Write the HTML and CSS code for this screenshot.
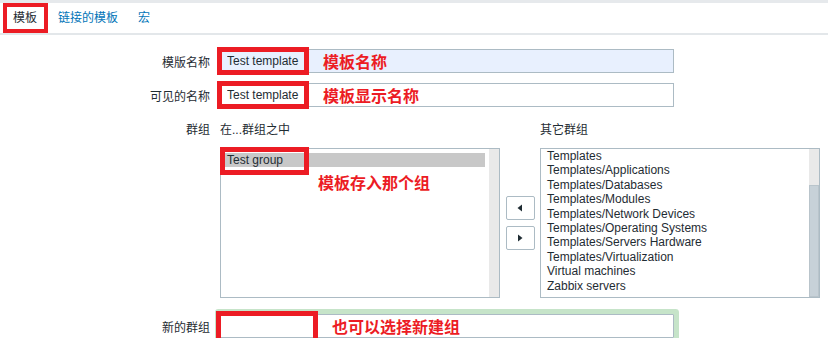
FILE: index.html
```html
<!DOCTYPE html>
<html>
  <head>
    <title>模板</title>
    <link rel="stylesheet" href="styles.css">
  </head>
  <body>
    <div class="topstrip"></div>
    <nav class="tabs">
      <span class="tab active">模板<span class="redbox tabbox"></span></span>
      <a class="tab">链接的模板</a>
      <a class="tab">宏</a>
    </nav>

    <form class="form" action="">
      <div class="row">
        <label class="lbl">模版名称</label>
        <div class="field">
          <input class="txt autofill" value="Test template">
          <span class="redbox namebox"></span>
          <span class="note">模板名称</span>
        </div>
      </div>

      <div class="row">
        <label class="lbl">可见的名称</label>
        <div class="field">
          <input class="txt" value="Test template">
          <span class="redbox namebox"></span>
          <span class="note">模板显示名称</span>
        </div>
      </div>

      <div class="row groups">
        <label class="lbl head">群组</label>
        <div class="twin">
          <div class="col">
            <div class="head">在...群组之中</div>
            <div class="listbox field">
              <div class="items pad">
                <div class="opt selected">Test group</div>
              </div>
              <div class="sbar"></div>
              <span class="redbox groupbox"></span>
              <span class="note groupnote">模板存入那个组</span>
            </div>
          </div>
          <div class="moves">
            <button type="button" class="mv">
              <svg width="6" height="8" viewBox="0 0 6 8"><path d="M5 0.5 L0.5 4 L5 7.5 Z" fill="#1f2c33"/></svg>
            </button>
            <button type="button" class="mv">
              <svg width="6" height="8" viewBox="0 0 6 8"><path d="M1 0.5 L5.5 4 L1 7.5 Z" fill="#1f2c33"/></svg>
            </button>
          </div>
          <div class="col">
            <div class="head">其它群组</div>
            <div class="listbox">
              <div class="items">
                <div class="opt">Templates</div>
                <div class="opt">Templates/Applications</div>
                <div class="opt">Templates/Databases</div>
                <div class="opt">Templates/Modules</div>
                <div class="opt">Templates/Network Devices</div>
                <div class="opt">Templates/Operating Systems</div>
                <div class="opt">Templates/Servers Hardware</div>
                <div class="opt">Templates/Virtualization</div>
                <div class="opt">Virtual machines</div>
                <div class="opt">Zabbix servers</div>
              </div>
              <div class="sbar"><div class="thumb"></div></div>
            </div>
          </div>
        </div>
      </div>

      <div class="row newgroup">
        <label class="lbl">新的群组</label>
        <div class="field">
          <input class="txt glow" value="">
          <span class="redbox newbox"></span>
          <span class="note newnote">也可以选择新建组</span>
        </div>
      </div>
    </form>
  </body>
</html>
```

FILE: styles.css
```css
body {
  margin: 0;
  background: #fff;
  color: #1f2c33;
  font-family: "Liberation Sans", Arial, "Noto Sans CJK SC", sans-serif;
  font-size: 12px;
  overflow: hidden;
}

.topstrip { height: 3px; background: #e6e9ec; }

.tabs {
  display: flex;
  height: 30px;
  align-items: center;
  padding-left: 3px;
  border-bottom: 2px solid #e3e7ea;
}
.tab {
  position: relative;
  height: 30px;
  line-height: 30px;
  padding: 0 10px;
  color: #0275b8;
}
.tab.active { color: #1f2c33; padding-right: 11px; }

.redbox {
  position: absolute;
  border: 5px solid #ec1c24;
  box-sizing: border-box;
  pointer-events: none;
}
.tabbox { left: 0; top: 0; width: 45px; height: 30px; border-width: 4px; }

.note {
  position: absolute;
  top: 50%;
  transform: translateY(-50%);
  color: #ec1c24;
  font-family: "Noto Sans CJK SC", sans-serif;
  font-weight: 700;
  font-size: 16px;
  line-height: 20px;
  white-space: nowrap;
}

.form { display: flex; flex-direction: column; padding-top: 14px; }

.row {
  display: grid;
  grid-template-columns: 210px 454px;
  column-gap: 10px;
  align-items: center;
  margin-bottom: 10px;
}
.lbl { text-align: right; }

.field { position: relative; }

.txt {
  display: block;
  box-sizing: border-box;
  width: 454px;
  height: 24px;
  margin: 0;
  padding: 0 6px;
  border: 1px solid #acbbc4;
  background: #fff;
  color: #1f2c33;
  font: 12px "Liberation Sans", Arial, sans-serif;
  outline: none;
}
.txt.autofill { background: #e8f0fe; }

.namebox { left: -3px; top: -2px; width: 92px; height: 28px; }
.field .note { left: 103px; }

.groups {
  grid-template-columns: 210px 600px;
  align-items: start;
  margin-top: 5px;
  margin-bottom: 16px;
}
.head { line-height: 16px; height: 16px; }
.twin { display: flex; align-items: stretch; }
.col { display: flex; flex-direction: column; flex: none; width: 280px; }
.col .head { margin-bottom: 10px; }

.listbox {
  display: flex;
  box-sizing: border-box;
  height: 150px;
  border: 1px solid #acbbc4;
  background: #fff;
}
.items { flex: 1; overflow: hidden; padding: 0 4px; }
.items.pad { padding-top: 4px; }
.opt { line-height: 14.4px; height: 14.4px; padding-left: 2px; white-space: nowrap; }
.opt.selected { background: #c8c8c8; height: 14px; line-height: 14px; }

.sbar { width: 10px; background: #e9e9e9; display: flex; flex-direction: column; }
.thumb {
  margin-top: 36px;
  flex: 1;
  background: #c7d1d8;
  border: 1px solid #b9c4cb;
}

.groupbox { left: -1px; top: -2px; width: 89px; height: 28px; }
.field .groupnote { left: 97px; top: 33px; }

.moves {
  flex: none;
  width: 40px;
  display: flex;
  flex-direction: column;
  justify-content: center;
  align-items: center;
  gap: 6px;
  padding-top: 26px;
}
.mv {
  width: 29px;
  height: 24px;
  padding: 0;
  margin: 0;
  display: flex;
  align-items: center;
  justify-content: center;
  background: #fff;
  border: 1px solid #acbbc4;
  border-radius: 2px;
}

.newgroup { margin-bottom: 0; }
.glow { box-shadow: 0 0 0 5px #c6e4c9; border-radius: 1px; }
.newbox { left: -4px; top: -3px; width: 102px; height: 32px; }
.field .newnote { left: 112px; }
```
